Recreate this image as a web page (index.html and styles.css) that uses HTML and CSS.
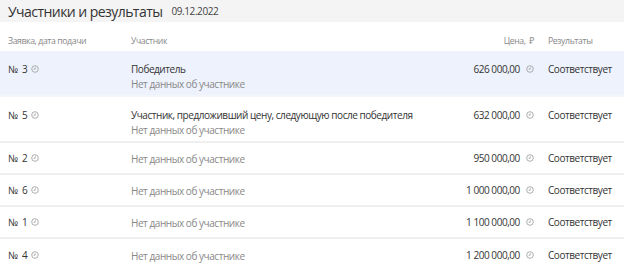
FILE: index.html
```html
<!DOCTYPE html>
<html lang="ru">
<head>
<meta charset="utf-8">
<link rel="stylesheet" href="styles.css">
</head>
<body>
<div class="panel">
  <div class="title-bar">
    <span class="title">Участники и результаты</span>
    <span class="date">09.12.2022</span>
  </div>
  <div class="table">
    <div class="row head">
      <div class="c1">Заявка, дата подачи</div>
      <div class="c2">Участник</div>
      <div class="c3">Цена,&nbsp; ₽</div>
      <div class="c4">Результаты</div>
    </div>
    <div class="row tall active">
      <div class="c1">№ 3 <svg class="clk" viewBox="0 0 8 8"><circle cx="4" cy="4" r="3.3"/><path d="M2.6 4.2H4.2V2.4"/></svg></div>
      <div class="c2"><div class="name">Победитель</div><div class="muted">Нет данных об участнике</div></div>
      <div class="c3">626 000,00 <svg class="clk" viewBox="0 0 8 8"><circle cx="4" cy="4" r="3.3"/><path d="M2.6 4.2H4.2V2.4"/></svg></div>
      <div class="c4">Соответствует</div>
    </div>
    <div class="row tall">
      <div class="c1">№ 5 <svg class="clk" viewBox="0 0 8 8"><circle cx="4" cy="4" r="3.3"/><path d="M2.6 4.2H4.2V2.4"/></svg></div>
      <div class="c2"><div class="name">Участник, предложивший цену, следующую после победителя</div><div class="muted">Нет данных об участнике</div></div>
      <div class="c3">632 000,00 <svg class="clk" viewBox="0 0 8 8"><circle cx="4" cy="4" r="3.3"/><path d="M2.6 4.2H4.2V2.4"/></svg></div>
      <div class="c4">Соответствует</div>
    </div>
    <div class="row">
      <div class="c1">№ 2 <svg class="clk" viewBox="0 0 8 8"><circle cx="4" cy="4" r="3.3"/><path d="M2.6 4.2H4.2V2.4"/></svg></div>
      <div class="c2 muted">Нет данных об участнике</div>
      <div class="c3">950 000,00 <svg class="clk" viewBox="0 0 8 8"><circle cx="4" cy="4" r="3.3"/><path d="M2.6 4.2H4.2V2.4"/></svg></div>
      <div class="c4">Соответствует</div>
    </div>
    <div class="row">
      <div class="c1">№ 6 <svg class="clk" viewBox="0 0 8 8"><circle cx="4" cy="4" r="3.3"/><path d="M2.6 4.2H4.2V2.4"/></svg></div>
      <div class="c2 muted">Нет данных об участнике</div>
      <div class="c3">1 000 000,00 <svg class="clk" viewBox="0 0 8 8"><circle cx="4" cy="4" r="3.3"/><path d="M2.6 4.2H4.2V2.4"/></svg></div>
      <div class="c4">Соответствует</div>
    </div>
    <div class="row">
      <div class="c1">№ 1 <svg class="clk" viewBox="0 0 8 8"><circle cx="4" cy="4" r="3.3"/><path d="M2.6 4.2H4.2V2.4"/></svg></div>
      <div class="c2 muted">Нет данных об участнике</div>
      <div class="c3">1 100 000,00 <svg class="clk" viewBox="0 0 8 8"><circle cx="4" cy="4" r="3.3"/><path d="M2.6 4.2H4.2V2.4"/></svg></div>
      <div class="c4">Соответствует</div>
    </div>
    <div class="row last">
      <div class="c1">№ 4 <svg class="clk" viewBox="0 0 8 8"><circle cx="4" cy="4" r="3.3"/><path d="M2.6 4.2H4.2V2.4"/></svg></div>
      <div class="c2 muted">Нет данных об участнике</div>
      <div class="c3">1 200 000,00 <svg class="clk" viewBox="0 0 8 8"><circle cx="4" cy="4" r="3.3"/><path d="M2.6 4.2H4.2V2.4"/></svg></div>
      <div class="c4">Соответствует</div>
    </div>
  </div>
</div>
</body>
</html>
```
FILE: styles.css
```css
* { box-sizing: border-box; }
html, body { margin: 0; padding: 0; background: #fff; }
body {
  font-family: "Open Sans", "Noto Sans", sans-serif;
  color: #333;
  font-size: 10px;
  letter-spacing: -0.45px;
}
.panel { width: 624px; height: 270px; overflow: hidden; }
.title-bar {
  background: #f4f4f4;
  height: 22px;
  display: flex;
  align-items: center;
  padding-left: 8px;
  gap: 9px;
}
.title { font-size: 14px; color: #333; letter-spacing: -0.55px; }
.date { font-size: 10px; color: #444; letter-spacing: -0.4px; }
.row {
  display: grid;
  grid-template-columns: 123px 287px 130px 76px;
  padding-left: 8px;
  align-items: center;
  height: 32px;
  border-bottom: 2px solid #efefef;
}
.row.head {
  height: 29px;
  border-bottom: none;
  color: #888;
  font-size: 8.7px;
  letter-spacing: -0.4px;
  padding-top: 9px;
}
.row.tall { height: 46px; align-items: start; padding-top: 11px; }
.row.active { background: #eef2fd; border-bottom-color: #f3f5fa; }
.row.last { border-bottom: none; }
.c1 { display: flex; align-items: center; gap: 4px; word-spacing: 2px; }
.row.head .c1 { word-spacing: normal; }
.c2 { white-space: nowrap; }
.c3 { display: flex; align-items: center; justify-content: flex-end; gap: 4px; padding-right: 14px; white-space: pre; }
.name { color: #333; }
.muted { color: #888; margin-top: 1px; }
.clk { width: 8px; height: 8px; fill: none; stroke: #999; stroke-width: 0.8; flex: none; }
```
